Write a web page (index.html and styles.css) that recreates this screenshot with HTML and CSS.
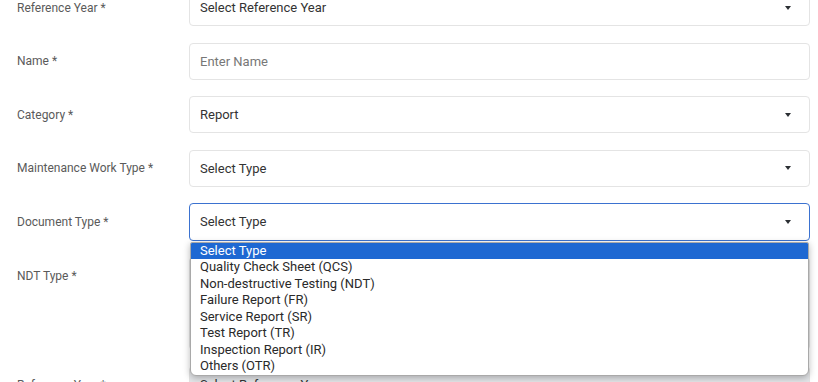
FILE: index.html
```html
<!DOCTYPE html>
<html lang="en">
<head>
    <meta charset="UTF-8">
    <meta name="viewport" content="width=device-width, initial-scale=1.0">
    <title>Document Entry</title>
    <link rel="stylesheet" href="styles.css">
</head>
<body>
    <form class="entry-form">
        <div class="form-row">
            <label class="form-label">Reference Year *</label>
            <div class="form-field select">Select Reference Year<span class="caret"></span></div>
        </div>

        <div class="form-row">
            <label class="form-label">Name *</label>
            <div class="form-field placeholder">Enter Name</div>
        </div>

        <div class="form-row">
            <label class="form-label">Category *</label>
            <div class="form-field select">Report<span class="caret"></span></div>
        </div>

        <div class="form-row">
            <label class="form-label">Maintenance Work Type *</label>
            <div class="form-field select">Select Type<span class="caret"></span></div>
        </div>

        <div class="form-row">
            <label class="form-label">Document Type *</label>
            <div class="field-wrap">
                <div class="form-field select focused">Select Type<span class="caret"></span></div>
                <ul class="dropdown">
                    <li class="selected">Select Type</li>
                    <li>Quality Check Sheet (QCS)</li>
                    <li>Non-destructive Testing (NDT)</li>
                    <li>Failure Report (FR)</li>
                    <li>Service Report (SR)</li>
                    <li>Test Report (TR)</li>
                    <li>Inspection Report (IR)</li>
                    <li>Others (OTR)</li>
                </ul>
            </div>
        </div>

        <div class="form-row top">
            <label class="form-label">NDT Type *</label>
            <div class="form-field multi"></div>
        </div>

        <div class="form-row">
            <label class="form-label">Reference Year *</label>
            <div class="form-field select disabled">Select Reference Year<span class="caret"></span></div>
        </div>
    </form>
</body>
</html>
```

FILE: styles.css
```css
/* Reset */
* {
    margin: 0;
    padding: 0;
    box-sizing: border-box;
}

body {
    font-family: Roboto, 'Liberation Sans', sans-serif;
    font-size: 13px;
    background: #fff;
    color: #333;
    overflow: hidden;
}

/* Formulário */
.entry-form {
    margin-top: -11px;
    padding: 0 8px 0 17px;
    display: flex;
    flex-direction: column;
    gap: 16.4px;
}

.form-row {
    display: flex;
    align-items: center;
}

.form-row.top {
    align-items: flex-start;
}

.form-label {
    width: 172px;
    flex-shrink: 0;
    font-size: 12px;
    color: #5a5a5a;
}

.form-row.top .form-label {
    padding-top: 12px;
}

.field-wrap {
    flex: 1;
    position: relative;
}

.form-field {
    flex: 1;
    height: 37.2px;
    border: 1px solid #e4e4e4;
    border-radius: 4px;
    padding: 0 18px 0 10px;
    display: flex;
    align-items: center;
    justify-content: space-between;
    color: #333;
    background: #fff;
}

.form-field.placeholder {
    color: #777;
}

.form-field.focused {
    border-color: #3b72d0;
}

.form-field.multi {
    height: 93px;
}

.form-field.disabled {
    background: #e4e6e9;
}

.caret {
    width: 0;
    height: 0;
    border-top: 4px solid #2b2f33;
    border-left: 3.5px solid transparent;
    border-right: 3.5px solid transparent;
}

/* Lista aberta */
.dropdown {
    position: absolute;
    top: 38.5px;
    left: 1px;
    right: 1px;
    list-style: none;
    background: #fff;
    border: 1px solid #a9a9a9;
    border-radius: 2px 2px 6px 6px;
    box-shadow: 0 2px 7px rgba(0, 0, 0, 0.28);
    overflow: hidden;
    z-index: 10;
}

.dropdown li {
    height: 16.5px;
    line-height: 16.5px;
    padding-left: 9px;
    color: #2a2a2a;
}

.dropdown li.selected {
    background: #1e68d2;
    color: #fff;
}
```
